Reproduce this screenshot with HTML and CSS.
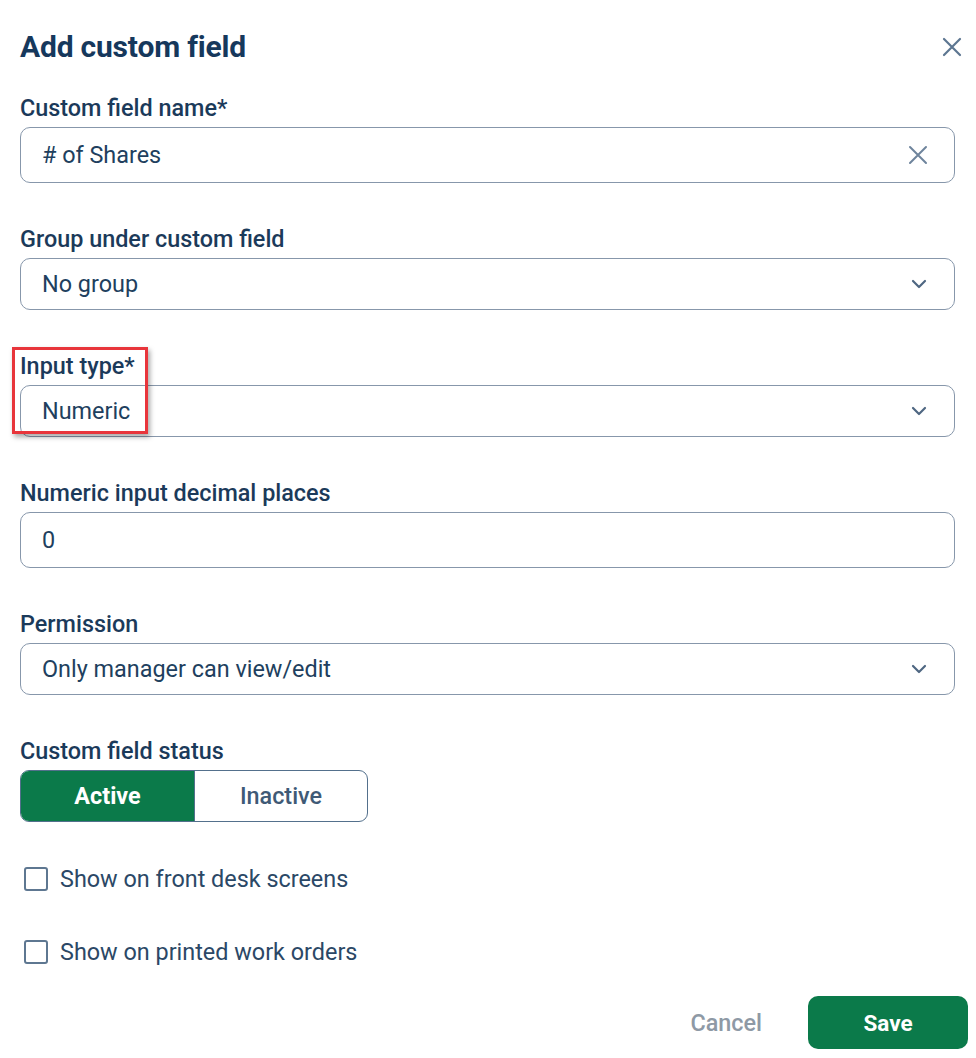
FILE: index.html
```html
<!DOCTYPE html>
<html>
<head>
<meta charset="utf-8">
<link rel="stylesheet" href="styles.css">
</head>
<body>
<div class="dialog">
  <div class="header">
    <h1 class="title">Add custom field</h1>
    <span class="close">
      <svg width="20" height="20" viewBox="0 0 20 20"><path d="M2 2 L18 18 M18 2 L2 18" stroke="#5d7691" stroke-width="2.2" stroke-linecap="round" fill="none"/></svg>
    </span>
  </div>

  <div class="group">
    <div class="label">Custom field name*</div>
    <div class="field tall">
      <span class="value"># of Shares</span>
      <svg class="clear" width="20" height="20" viewBox="0 0 20 20"><path d="M2 2 L18 18 M18 2 L2 18" stroke="#6e849c" stroke-width="2" stroke-linecap="round" fill="none"/></svg>
    </div>
  </div>

  <div class="group">
    <div class="label">Group under custom field</div>
    <div class="field">
      <span class="value">No group</span>
      <svg class="chev" width="16" height="10" viewBox="0 0 16 10"><path d="M2 2 L8 8 L14 2" stroke="#4f6782" stroke-width="2.2" stroke-linecap="round" stroke-linejoin="round" fill="none"/></svg>
    </div>
  </div>

  <div class="group">
    <div class="highlight-wrap">
      <div class="label">Input type*</div>
      <div class="field">
        <span class="value">Numeric</span>
        <svg class="chev" width="16" height="10" viewBox="0 0 16 10"><path d="M2 2 L8 8 L14 2" stroke="#4f6782" stroke-width="2.2" stroke-linecap="round" stroke-linejoin="round" fill="none"/></svg>
      </div>
      <div class="highlight"></div>
    </div>
  </div>

  <div class="group">
    <div class="label">Numeric input decimal places</div>
    <div class="field tall">
      <span class="value">0</span>
    </div>
  </div>

  <div class="group">
    <div class="label">Permission</div>
    <div class="field">
      <span class="value">Only manager can view/edit</span>
      <svg class="chev" width="16" height="10" viewBox="0 0 16 10"><path d="M2 2 L8 8 L14 2" stroke="#4f6782" stroke-width="2.2" stroke-linecap="round" stroke-linejoin="round" fill="none"/></svg>
    </div>
  </div>

  <div class="group">
    <div class="label">Custom field status</div>
    <div class="toggle">
      <div class="opt active">Active</div>
      <div class="opt">Inactive</div>
    </div>
  </div>

  <label class="check first"><span class="box"></span><span>Show on front desk screens</span></label>
  <label class="check"><span class="box"></span><span>Show on printed work orders</span></label>

  <div class="footer">
    <button class="cancel">Cancel</button>
    <button class="save">Save</button>
  </div>
</div>
</body>
</html>
```

FILE: styles.css
```css
* { box-sizing: border-box; }
html, body { margin: 0; padding: 0; background: #ffffff; }
body {
  font-family: Roboto, "Liberation Sans", Arial, sans-serif;
  color: #1f3d5c;
}
.dialog {
  width: 976px;
  height: 1058px;
  padding: 0 21px 0 20px;
  position: relative;
}
.header {
  display: flex;
  align-items: center;
  justify-content: space-between;
  height: 96px;
}
.title {
  margin: 0;
  font-size: 30px;
  font-weight: 700;
  color: #16385c;
  letter-spacing: -0.2px;
  line-height: 34px;
  margin-top: -2px;
}
.close {
  display: flex;
  margin-right: -7px;
  margin-top: -2px;
}
.close svg { width: 20px; height: 20px; }
.group { margin-bottom: 44px; }
.label {
  font-size: 23.4px;
  font-weight: 500;
  color: #1b3a5a;
  line-height: 24px;
  height: 24px;
  margin-bottom: 7px;
  white-space: nowrap;
}
.field {
  height: 52px;
  border: 1.5px solid #8797ab;
  border-radius: 10px;
  display: flex;
  align-items: center;
  justify-content: space-between;
  padding: 0 28px 0 21px;
}
.field.tall { height: 56px; }
.value {
  font-size: 23.4px;
  color: #213f5e;
}
.clear { margin-right: -2px; }
.chev { margin-right: -1px; }
.highlight-wrap { position: relative; }
.highlight-wrap .label { margin-top: 2px; margin-bottom: 7px; }
.highlight {
  position: absolute;
  left: -8px;
  top: -7px;
  width: 136px;
  height: 87px;
  border: 3px solid #e8353b;
  box-shadow: 2px 3px 5px rgba(0,0,0,0.35);
  pointer-events: none;
}
.toggle {
  display: flex;
  width: 348px;
  height: 52px;
  border: 1.5px solid #53708c;
  border-radius: 9px;
  overflow: hidden;
}
.opt {
  flex: 1;
  display: flex;
  align-items: center;
  justify-content: center;
  font-size: 23.4px;
  font-weight: 500;
  color: #3f5a76;
}
.opt.active {
  flex: 0 0 174px;
  background: #0b7a4a;
  color: #ffffff;
  font-weight: 700;
  border-right: 1.5px solid #53708c;
}
.check {
  display: flex;
  align-items: center;
  gap: 12px;
  font-size: 23.4px;
  color: #2b4866;
  height: 26px;
  padding-left: 4px;
}
.check.first { margin-top: 2px; margin-bottom: 47px; }
.box {
  width: 24px;
  height: 24px;
  border: 2px solid #5e7791;
  border-radius: 3px;
}
.footer {
  display: flex;
  justify-content: flex-end;
  align-items: center;
  margin-top: 31px;
  margin-right: -13px;
  gap: 46px;
}
button {
  font-family: Roboto, "Liberation Sans", Arial, sans-serif;
  border: none;
  cursor: pointer;
}
.cancel {
  background: none;
  font-size: 23.4px;
  font-weight: 500;
  color: #8e99a5;
  padding: 0;
}
.save {
  width: 160px;
  height: 53px;
  border-radius: 10px;
  background: #0b7a4a;
  color: #ffffff;
  font-size: 22.5px;
  font-weight: 700;
}
```
